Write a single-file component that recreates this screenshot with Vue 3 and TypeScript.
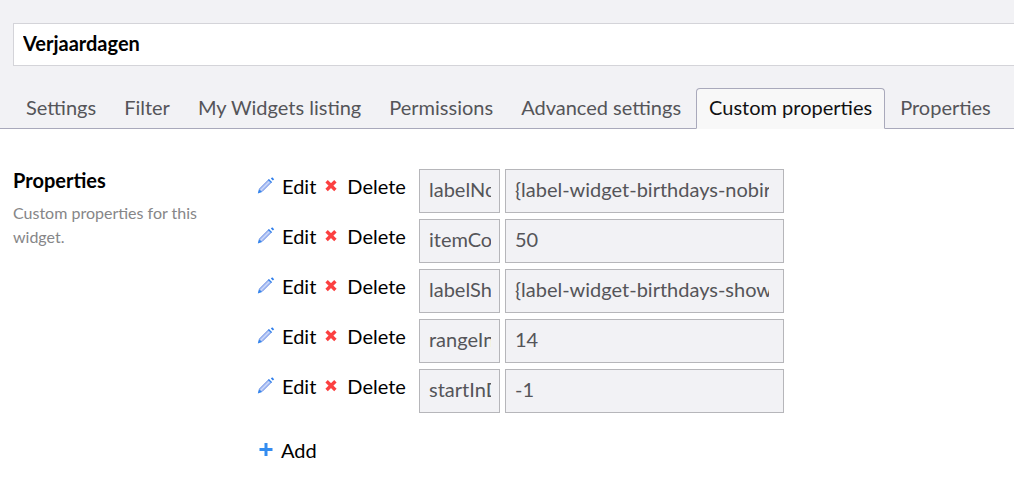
<script setup lang="ts">
import { ref } from 'vue'

interface Property {
  name: string
  value: string
}

const title = ref('Verjaardagen')
const tabs: string[] = [
  'Settings',
  'Filter',
  'My Widgets listing',
  'Permissions',
  'Advanced settings',
  'Custom properties',
  'Properties',
]
const activeTab = ref('Custom properties')

const properties = ref<Property[]>([
  { name: 'labelNoBirthdays', value: '{label-widget-birthdays-nobirthdays}' },
  { name: 'itemCount', value: '50' },
  { name: 'labelShowMore', value: '{label-widget-birthdays-showmore}' },
  { name: 'rangeInDays', value: '14' },
  { name: 'startInDays', value: '-1' },
])

function remove(index: number) {
  properties.value.splice(index, 1)
}

function add() {
  properties.value.push({ name: '', value: '' })
}
</script>

<template>
  <div class="page">
    <header class="top">
      <input v-model="title" class="title" type="text" aria-label="Title" />
      <nav class="tabs" role="tablist">
        <button
          v-for="tab in tabs"
          :key="tab"
          type="button"
          role="tab"
          class="tab"
          :class="{ active: tab === activeTab }"
          :aria-selected="tab === activeTab"
          @click="activeTab = tab"
        >
          {{ tab }}
        </button>
      </nav>
    </header>

    <main class="content">
      <section class="intro">
        <h2>Properties</h2>
        <p>Custom properties for this widget.</p>
      </section>

      <section class="list">
        <div v-for="(property, index) in properties" :key="index" class="row">
          <div class="actions">
            <button type="button" class="action edit">
              <svg width="18" height="18" viewBox="0 0 18 18" aria-hidden="true">
                <path d="M1 16 L2.2 12.2 L11.8 2.6 L14.4 5.2 L4.8 14.8 Z" fill="#b4c6f4" />
                <path d="M2.4 12 L11.8 2.6 M5 14.6 L14.4 5.2" stroke="#6d8ee6" stroke-width="1" fill="none" />
                <path d="M3.8 13.2 L13 4" stroke="#dfe9fd" stroke-width=".6" />
                <path d="M.8 16.4 L2 11.9 L5.1 15 Z" fill="#3484ec" />
                <path d="M11.4 2.4 L14.6 5.6" stroke="#3484ec" stroke-width="1.4" />
                <path d="M13.8 1.6 L15.2 .2 L17.2 2.2 L15.8 3.6 Z" fill="#2f7fec" />
              </svg>
              <span>Edit</span>
            </button>
            <button type="button" class="action delete" @click="remove(index)">
              <svg width="12" height="12" viewBox="0 0 12 12" aria-hidden="true">
                <path d="M1.6 1.2 L10.4 10 M10.4 1.2 L1.6 10" stroke="#fc4040" stroke-width="3.4" />
              </svg>
              <span>Delete</span>
            </button>
          </div>
          <input v-model="property.name" class="field name" type="text" aria-label="Property name" />
          <input v-model="property.value" class="field value" type="text" aria-label="Property value" />
        </div>

        <button type="button" class="action add" @click="add">
          <svg width="14" height="14" viewBox="0 0 14 14" aria-hidden="true">
            <path d="M7 0 V13 M.5 6.5 H13.5" stroke="#338cf0" stroke-width="3" />
          </svg>
          <span>Add</span>
        </button>
      </section>
    </main>
  </div>
</template>

<style>
body {
  margin: 0;
  background: #fff;
}
</style>

<style scoped>
.page,
.page button,
.page input {
  font-family: Lato, Carlito, sans-serif;
  font-size: 20px;
}

.page {
  overflow-x: hidden;
  color: #000;
}

button {
  margin: 0;
  border: 0;
  background: none;
  color: inherit;
  cursor: pointer;
}

input {
  box-sizing: border-box;
  margin: 0;
  border-radius: 0;
}

.top {
  padding-top: 23px;
  background: #f2f2f5;
}

.page .title {
  display: block;
  width: calc(100% - 12px);
  height: 43px;
  margin-left: 13px;
  padding: 0 9px 3px;
  border: 1px solid #d4d4d9;
  background: #fff;
  color: #000;
  font-weight: 700;
}

.tabs {
  display: flex;
  gap: 2px;
  margin-top: 22px;
  padding-left: 13px;
  border-bottom: 1px solid #a9a9bb;
}

.tab {
  box-sizing: border-box;
  height: 41px;
  margin-bottom: -1px;
  padding: 0 12px 4px;
  border: 1px solid transparent;
  border-radius: 4px 4px 0 0;
  color: #555559;
  line-height: 24px;
  white-space: nowrap;
}

.tab.active {
  border-color: #a9a9bb;
  border-bottom-color: #f8f8f8;
  background: #f8f8f8;
  color: #111;
}

.content {
  display: flex;
  align-items: flex-start;
  padding: 40px 13px 24px;
}

.intro {
  flex: 0 0 200px;
  margin-right: 44px;
}

.intro h2 {
  margin: 0;
  font-size: 20px;
  line-height: 22px;
}

.intro p {
  margin: 10px 0 0;
  color: #868688;
  font-size: 16px;
  line-height: 24px;
}

.list {
  flex: 1;
  min-width: 0;
}

.row {
  display: flex;
  align-items: flex-start;
  margin-bottom: 6px;
}

.actions {
  display: flex;
  flex: 0 0 162px;
  gap: 9px;
  padding-top: 5px;
}

.action {
  display: flex;
  align-items: center;
  padding: 0;
  line-height: 24px;
}

.edit {
  gap: 7px;
}

.delete {
  gap: 10px;
}

.add {
  gap: 8px;
  margin: 25px 0 0 2px;
}

.field {
  height: 44px;
  padding: 0 9px 4px;
  border: 1px solid #b6b6ba;
  background: #f2f2f5;
  color: #555559;
}

.name {
  flex: 0 0 81px;
  width: 81px;
  margin-right: 5px;
  padding-right: 8px;
}

.value {
  flex: 0 1 279px;
  width: 279px;
  min-width: 0;
  padding-right: 14px;
}
</style>
